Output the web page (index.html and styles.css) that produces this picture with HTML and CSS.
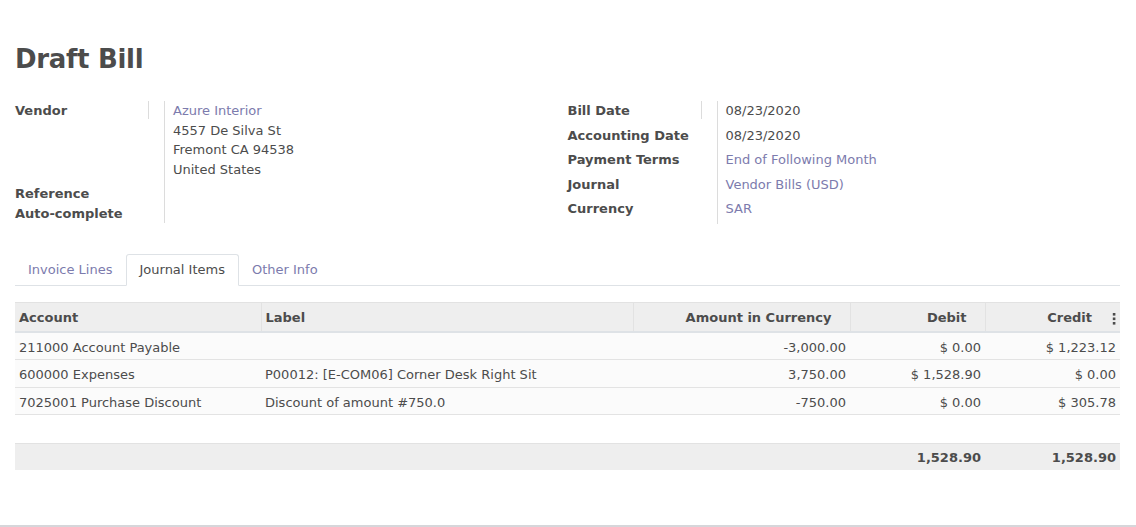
FILE: index.html
```html
<!DOCTYPE html>
<html lang="en">
<head>
<meta charset="utf-8">
<title>Draft Bill</title>
<link rel="stylesheet" href="styles.css">
</head>
<body>
<div class="sheet">
  <h1 class="title">Draft Bill</h1>

  <div class="groups">
    <div class="group group-left">
      <div class="lbl lbl-first">Vendor</div>
      <div class="val">
        <a class="link">Azure Interior</a><br>
        4557 De Silva St<br>
        Fremont CA 94538<br>
        United States
      </div>
      <div class="lbl">Reference<br>Auto-complete</div>
      <div class="val val-last"></div>
    </div>
    <div class="group group-right">
      <div class="lbl lbl-first">Bill Date</div>
      <div class="val">08/23/2020</div>
      <div class="lbl">Accounting Date</div>
      <div class="val">08/23/2020</div>
      <div class="lbl">Payment Terms</div>
      <div class="val"><a class="link">End of Following Month</a></div>
      <div class="lbl">Journal</div>
      <div class="val"><a class="link">Vendor Bills (USD)</a></div>
      <div class="lbl">Currency</div>
      <div class="val"><a class="link">SAR</a></div>
    </div>
  </div>

  <ul class="tabs">
    <li class="tab">Invoice Lines</li>
    <li class="tab tab-active">Journal Items</li>
    <li class="tab">Other Info</li>
  </ul>

  <table class="lines">
    <colgroup>
      <col class="c-account">
      <col class="c-label">
      <col class="c-amount">
      <col class="c-debit">
      <col class="c-credit">
    </colgroup>
    <thead>
      <tr>
        <th>Account</th>
        <th>Label</th>
        <th class="num">Amount in Currency</th>
        <th class="num">Debit</th>
        <th class="num th-last">Credit
          <svg class="kebab" width="4" height="12" viewBox="0 0 4 12"><rect x="0.8" y="0" width="2.6" height="2.6" fill="#4c4c4c"/><rect x="0.8" y="4.5" width="2.6" height="2.6" fill="#4c4c4c"/><rect x="0.8" y="9" width="2.6" height="2.6" fill="#4c4c4c"/></svg>
        </th>
      </tr>
    </thead>
    <tbody>
      <tr class="row">
        <td>211000 Account Payable</td>
        <td></td>
        <td class="num">-3,000.00</td>
        <td class="num">$ 0.00</td>
        <td class="num">$ 1,223.12</td>
      </tr>
      <tr class="row">
        <td>600000 Expenses</td>
        <td>P00012: [E-COM06] Corner Desk Right Sit</td>
        <td class="num">3,750.00</td>
        <td class="num">$ 1,528.90</td>
        <td class="num">$ 0.00</td>
      </tr>
      <tr class="row">
        <td>7025001 Purchase Discount</td>
        <td>Discount of amount #750.0</td>
        <td class="num">-750.00</td>
        <td class="num">$ 0.00</td>
        <td class="num">$ 305.78</td>
      </tr>
      <tr class="filler">
        <td colspan="5"></td>
      </tr>
    </tbody>
    <tfoot>
      <tr>
        <td></td>
        <td></td>
        <td></td>
        <td class="num">1,528.90</td>
        <td class="num">1,528.90</td>
      </tr>
    </tfoot>
  </table>
</div>
</body>
</html>
```

FILE: styles.css
```css
html, body {
  margin: 0;
  padding: 0;
  background: #ffffff;
}

body {
  font-family: "DejaVu Sans", Verdana, sans-serif;
  font-size: 13px;
  line-height: 19.5px;
  color: #4c4c4c;
}

.sheet {
  box-sizing: border-box;
  min-height: 527px;
  padding: 44px 16px 0 15px;
  border-bottom: 2px solid #d6d6da;
}

.title {
  margin: 0;
  font-size: 26px;
  line-height: 31px;
  font-weight: bold;
  letter-spacing: -0.3px;
  color: #4c4c4c;
}

.groups {
  display: flex;
  margin-top: 26px;
}

.group {
  flex: 1 1 0;
  display: grid;
  grid-template-columns: 134px 1fr;
  align-content: start;
}

.lbl {
  font-weight: bold;
  align-self: start;
  color: #4c4c4c;
}

.lbl-first {
  border-right: 1px solid #dcdcdc;
  height: 18px;
}

.val {
  margin-left: 15px;
  padding-left: 8px;
  padding-bottom: 5px;
  border-left: 1px solid #dcdcdc;
}

.group-left .val-last {
  padding-bottom: 0;
}

.link {
  color: #7c7bad;
  text-decoration: none;
}

.tabs {
  list-style: none;
  margin: 30px 0 0;
  padding: 0;
  display: flex;
  border-bottom: 1px solid #dee2e6;
}

.tab {
  padding: 5px 13px 6px 12px;
  border: 1px solid transparent;
  border-top-left-radius: 3px;
  border-top-right-radius: 3px;
  margin-bottom: -1px;
  color: #7c7bad;
}

.tab-active {
  color: #4c4c4c;
  background: #ffffff;
  border-color: #dee2e6 #dee2e6 #ffffff;
}

.lines {
  margin-top: 16px;
  width: 100%;
  border-collapse: collapse;
  table-layout: fixed;
}

.c-account { width: 246px; }
.c-label { width: 372px; }
.c-amount { width: 217px; }
.c-debit { width: 135px; }
.c-credit { width: 135px; }

.lines th {
  background: #eeeeee;
  font-weight: bold;
  text-align: left;
  padding: 5px 4px 3px;
  border-top: 1px solid #e2e2e2;
  border-bottom: 2px solid #dee2e6;
  border-left: 1px solid #e2e2e2;
  white-space: nowrap;
}

.lines th:first-child {
  border-left: none;
}

.lines th.num {
  text-align: right;
  padding-right: 18px;
}

.lines th.th-last {
  position: relative;
  padding-right: 28px;
}

.kebab {
  position: absolute;
  right: 4px;
  top: 10px;
}

.lines td {
  padding: 5px 4px 2px;
  white-space: nowrap;
  overflow: hidden;
}

.lines td.num {
  text-align: right;
}

.row td {
  background: #fbfbfb;
  border-bottom: 1px solid #e3e3e3;
}

.filler td {
  height: 21px;
  background: #ffffff;
}

.lines tfoot td {
  background: #eeeeee;
  border-top: 1px solid #e2e2e2;
  font-weight: bold;
  padding: 4px 4px 2px;
}
```
